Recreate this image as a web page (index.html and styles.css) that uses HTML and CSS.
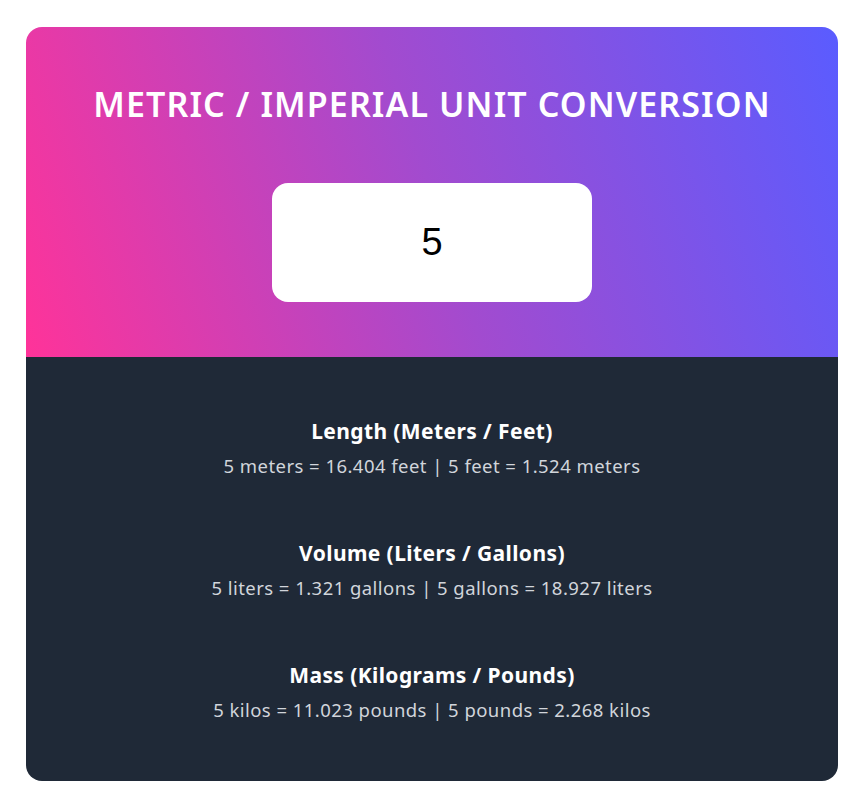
FILE: index.html
```html
<!DOCTYPE html>
<html lang="en">
<head>
<meta charset="utf-8">
<title>Metric / Imperial Unit Conversion</title>
<link rel="stylesheet" href="styles.css">
</head>
<body>
<main class="card">
  <section class="top">
    <h1 class="title">METRIC / IMPERIAL UNIT CONVERSION</h1>
    <input class="num-input" type="text" value="5">
  </section>
  <section class="results">
    <div class="group">
      <h2 class="group-title">Length (Meters / Feet)</h2>
      <p class="group-text">5 meters = 16.404 feet | 5 feet = 1.524 meters</p>
    </div>
    <div class="group">
      <h2 class="group-title">Volume (Liters / Gallons)</h2>
      <p class="group-text">5 liters = 1.321 gallons | 5 gallons = 18.927 liters</p>
    </div>
    <div class="group">
      <h2 class="group-title">Mass (Kilograms / Pounds)</h2>
      <p class="group-text">5 kilos = 11.023 pounds | 5 pounds = 2.268 kilos</p>
    </div>
  </section>
</main>
</body>
</html>
```
FILE: styles.css
```css
* { box-sizing: border-box; }
html, body { margin: 0; padding: 0; background: #ffffff; }
body {
  font-family: "Noto Sans", "Open Sans", sans-serif;
  padding: 27px 28px 25px 26px;
}
.card {
  width: 812px;
  border-radius: 16px;
  overflow: hidden;
  display: flex;
  flex-direction: column;
}
.top {
  height: 330px;
  padding-top: 57px;
  display: flex;
  flex-direction: column;
  align-items: center;
  background: linear-gradient(72deg, #ff3399 0%, #a24bcf 50%, #5a5cff 100%);
}
.title {
  margin: 0;
  color: #ffffff;
  font-size: 34px;
  line-height: 40px;
  font-weight: 600;
  letter-spacing: 1.1px;
  text-align: center;
}
.num-input {
  margin-top: 59px;
  width: 320px;
  height: 119px;
  border: none;
  outline: none;
  border-radius: 16px;
  background: #ffffff;
  text-align: center;
  font-family: "Liberation Sans", Arial, sans-serif;
  font-size: 38px;
  color: #000000;
  padding: 0;
}
.results {
  background: #1f2937;
  height: 424px;
  padding-top: 60px;
  display: flex;
  flex-direction: column;
  align-items: center;
  gap: 59px;
}
.group {
  display: flex;
  flex-direction: column;
  align-items: center;
}
.group-title {
  margin: 0;
  color: #ffffff;
  font-size: 21px;
  line-height: 28px;
  font-weight: 700;
  letter-spacing: 0.4px;
}
.group-text {
  margin: 7px 0 0;
  color: #d1d5db;
  font-size: 18.5px;
  line-height: 28px;
  letter-spacing: 0.45px;
}
```
